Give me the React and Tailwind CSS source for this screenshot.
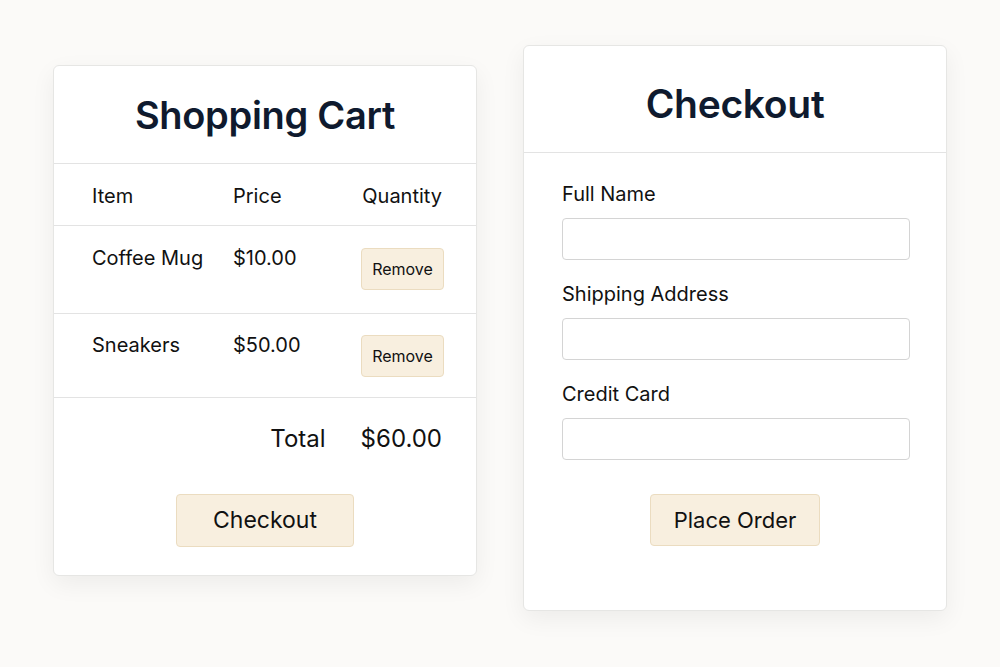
import React from "react";

const items = [
  { name: "Coffee Mug", price: "$10.00", pad: "pt-[20px] pb-[23px]" },
  { name: "Sneakers", price: "$50.00", pad: "pt-[19px] pb-[20px]" },
];

const fields = ["Full Name", "Shipping Address", "Credit Card"];

const ShoppingCart = () => {
  return (
    <div className="w-[424px] mt-[65px] bg-white border border-[#e6e6e4] rounded-md shadow-[0_8px_24px_rgba(0,0,0,0.06)]">
      <div className="h-[98px] flex items-center justify-center border-b border-[#e3e3e3]">
        <h2 className="text-[38px] leading-[46px] font-semibold text-[#0f1a2e] tracking-[-0.3px]">
          Shopping Cart
        </h2>
      </div>

      {/* Table header */}
      <div className="grid grid-cols-[141px_128px_1fr] pl-[38px] pr-[34px] pt-[20px] pb-[17px] border-b border-[#e3e3e3] text-[20px] leading-[24px] text-[#111]">
        <span>Item</span>
        <span>Price</span>
        <span className="text-right">Quantity</span>
      </div>

      {/* Rows */}
      {items.map((item) => (
        <div
          key={item.name}
          className={`grid grid-cols-[141px_128px_1fr] pl-[38px] pr-[34px] items-start border-b border-[#e3e3e3] text-[20px] text-[#111] ${item.pad}`}
        >
          <span className="leading-[24px]">{item.name}</span>
          <span className="leading-[24px]">{item.price}</span>
          <div className="flex justify-end pt-[2px]">
            <button className="h-[42px] w-[83px] bg-[#f8efdf] border border-[#ebdcc0] rounded-[4px] text-[16px] text-[#111]">
              Remove
            </button>
          </div>
        </div>
      ))}

      {/* Total */}
      <div className="flex justify-end items-center gap-[35px] pr-[34px] pt-[25px] text-[24px] leading-[32px] text-[#111]">
        <span>Total</span>
        <span>$60.00</span>
      </div>

      <div className="flex justify-center pt-[39px] pb-[28px]">
        <button className="h-[53px] w-[178px] bg-[#f8efdf] border border-[#ebdcc0] rounded-[4px] text-[23px] text-[#111]">
          Checkout
        </button>
      </div>
    </div>
  );
};

const CheckoutForm = () => {
  return (
    <div className="w-[424px] mt-[45px] bg-white border border-[#e6e6e4] rounded-md shadow-[0_8px_24px_rgba(0,0,0,0.06)]">
      <div className="pt-[34px] pb-[24px] flex justify-center border-b border-[#e3e3e3]">
        <h2 className="text-[39px] leading-[48px] font-semibold text-[#0f1a2e] tracking-[-0.3px]">
          Checkout
        </h2>
      </div>

      <form className="px-[38px] pt-[28px]">
        {fields.map((label) => (
          <div key={label} className="mb-[21px]">
            <label className="block text-[20px] leading-[26px] text-[#111] mb-[11px]">
              {label}
            </label>
            <input
              type="text"
              className="w-[348px] h-[42px] border border-[#d4d4d4] rounded-[4px] bg-white outline-none px-3"
            />
          </div>
        ))}

        <div className="flex justify-center pt-[13px] pb-[64px]">
          <button
            type="button"
            className="h-[52px] w-[170px] bg-[#f8efdf] border border-[#ebdcc0] rounded-[4px] text-[22px] text-[#111]"
          >
            Place Order
          </button>
        </div>
      </form>
    </div>
  );
};

export default function App() {
  return (
    <div
      className="w-[1000px] h-[667px] bg-[#fbfaf8] flex items-start gap-[46px] pl-[53px]"
      style={{ fontFamily: "Inter, 'Noto Sans', sans-serif" }}
    >
      <ShoppingCart />
      <CheckoutForm />
    </div>
  );
}
